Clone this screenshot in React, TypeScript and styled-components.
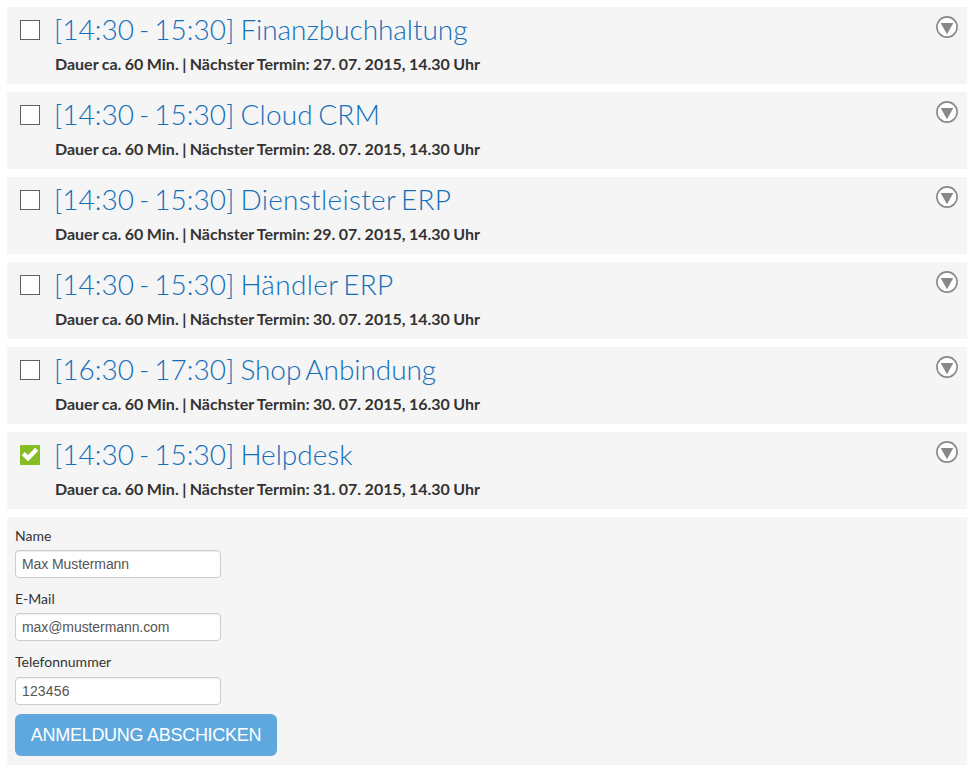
import React, { useState } from "react";
import styled, { createGlobalStyle } from "styled-components";

const GlobalStyle = createGlobalStyle`
  * { box-sizing: border-box; }
  body { margin: 0; background: #fff; color: #333; font-family: Lato, sans-serif; }
`;

const Page = styled.main`
  display: flex;
  flex-direction: column;
  gap: 8px;
  padding: 7px 4px 7px 7px;
`;

const Row = styled.article`
  display: flex;
  height: 77px;
  padding: 0 9px 0 13px;
  background: #f5f5f5;
`;

const Check = styled.button<{ $on: boolean }>`
  flex: none;
  width: 20px;
  height: 20px;
  margin: 13px 15px 0 0;
  padding: 0;
  display: flex;
  border: ${(p) => (p.$on ? "0" : "1px solid #606060")};
  border-radius: ${(p) => (p.$on ? "1px" : "0")};
  background: ${(p) => (p.$on ? "#84bd24" : "#fff")};
`;

const Body = styled.div`
  flex: 1;
`;

const Title = styled.h2`
  margin: 3px 0 0 -1px;
  font-size: 28px;
  line-height: 39px;
  font-weight: 300;
  color: #146fb9;
  white-space: nowrap;
  word-spacing: -2.6px;
`;

const Name = styled.span<{ $tracking: number }>`
  margin-left: 1px;
  letter-spacing: ${(p) => p.$tracking}px;
`;

const Meta = styled.p`
  margin: 4px 0 0;
  font-size: 16px;
  line-height: 21px;
  font-weight: 700;
  white-space: nowrap;
  word-spacing: -0.45px;
`;

const Toggle = styled.span`
  flex: none;
  display: flex;
  width: 22px;
  height: 22px;
  margin-top: 9px;
`;

const Form = styled.form`
  display: flex;
  flex-direction: column;
  align-items: flex-start;
  height: 248px;
  padding: 9px 8px 0;
  background: #f5f5f5;
`;

const Label = styled.label`
  display: block;
  height: 24px;
  font-size: 14px;
  line-height: 20px;
`;

const Input = styled.input`
  display: block;
  width: 206px;
  height: 28px;
  margin: 0 0 11px;
  padding: 4px 6px;
  border: 1px solid #ccc;
  border-radius: 4px;
  background: #fff;
  box-shadow: inset 0 1px 1px rgba(0, 0, 0, 0.075);
  color: #555;
  font: 14px/20px "Liberation Sans", Arial, sans-serif;
  letter-spacing: -0.08px;

  &:last-of-type {
    margin-top: 1px;
    margin-bottom: 9px;
    letter-spacing: 0.15px;
  }
`;

const Submit = styled.button`
  width: 262px;
  height: 42px;
  padding: 0;
  border: 0;
  border-radius: 6px;
  background: #5fa8dd;
  color: #fff;
  font: 18px/24px "Liberation Sans", Arial, sans-serif;
  letter-spacing: -0.28px;
  white-space: nowrap;
`;

const events = [
  { time: "[14:30 - 15:30]", name: "Finanzbuchhaltung", date: "27. 07. 2015, 14.30 Uhr", tracking: -0.05 },
  { time: "[14:30 - 15:30]", name: "Cloud CRM", date: "28. 07. 2015, 14.30 Uhr", tracking: 0.2 },
  { time: "[14:30 - 15:30]", name: "Dienstleister ERP", date: "29. 07. 2015, 14.30 Uhr", tracking: 0.32 },
  { time: "[14:30 - 15:30]", name: "Händler ERP", date: "30. 07. 2015, 14.30 Uhr", tracking: 0.33 },
  { time: "[16:30 - 17:30]", name: "Shop Anbindung", date: "30. 07. 2015, 16.30 Uhr", tracking: -0.05 },
  { time: "[14:30 - 15:30]", name: "Helpdesk", date: "31. 07. 2015, 14.30 Uhr", tracking: 0 },
];

const fields = [
  ["Name", "Max Mustermann"],
  ["E-Mail", "max@mustermann.com"],
  ["Telefonnummer", "123456"],
];

export default function App() {
  const [selected, setSelected] = useState(5);
  return (
    <>
      <GlobalStyle />
      <Page>
        {events.map(({ time, name, date, tracking }, i) => (
          <Row key={name}>
            <Check type="button" aria-label={name} $on={i === selected} onClick={() => setSelected(i)}>
              {i === selected && (
                <svg width="20" height="20" viewBox="0 0 20 20">
                  <path d="M2 10.2L4.7 7.3 8 10.4 15.2 3 18 5.8 8.1 16z" fill="#fff" stroke="#fff" strokeWidth="0.6" strokeLinejoin="round" />
                </svg>
              )}
            </Check>
            <Body>
              <Title>
                {time} <Name $tracking={tracking}>{name}</Name>
              </Title>
              <Meta>Dauer ca. 60 Min. | Nächster Termin: {date}</Meta>
            </Body>
            <Toggle>
              <svg width="22" height="22" viewBox="0 0 22 22">
                <circle cx="11" cy="11" r="10.1" fill="#fff" stroke="#888" strokeWidth="1.6" />
                <path d="M4.7 7h12.6L11 18.3z" fill="#888" />
              </svg>
            </Toggle>
          </Row>
        ))}
        <Form onSubmit={(e) => e.preventDefault()}>
          {fields.map(([label, value]) => (
            <React.Fragment key={label}>
              <Label htmlFor={label}>{label}</Label>
              <Input id={label} defaultValue={value} />
            </React.Fragment>
          ))}
          <Submit>ANMELDUNG ABSCHICKEN</Submit>
        </Form>
      </Page>
    </>
  );
}
